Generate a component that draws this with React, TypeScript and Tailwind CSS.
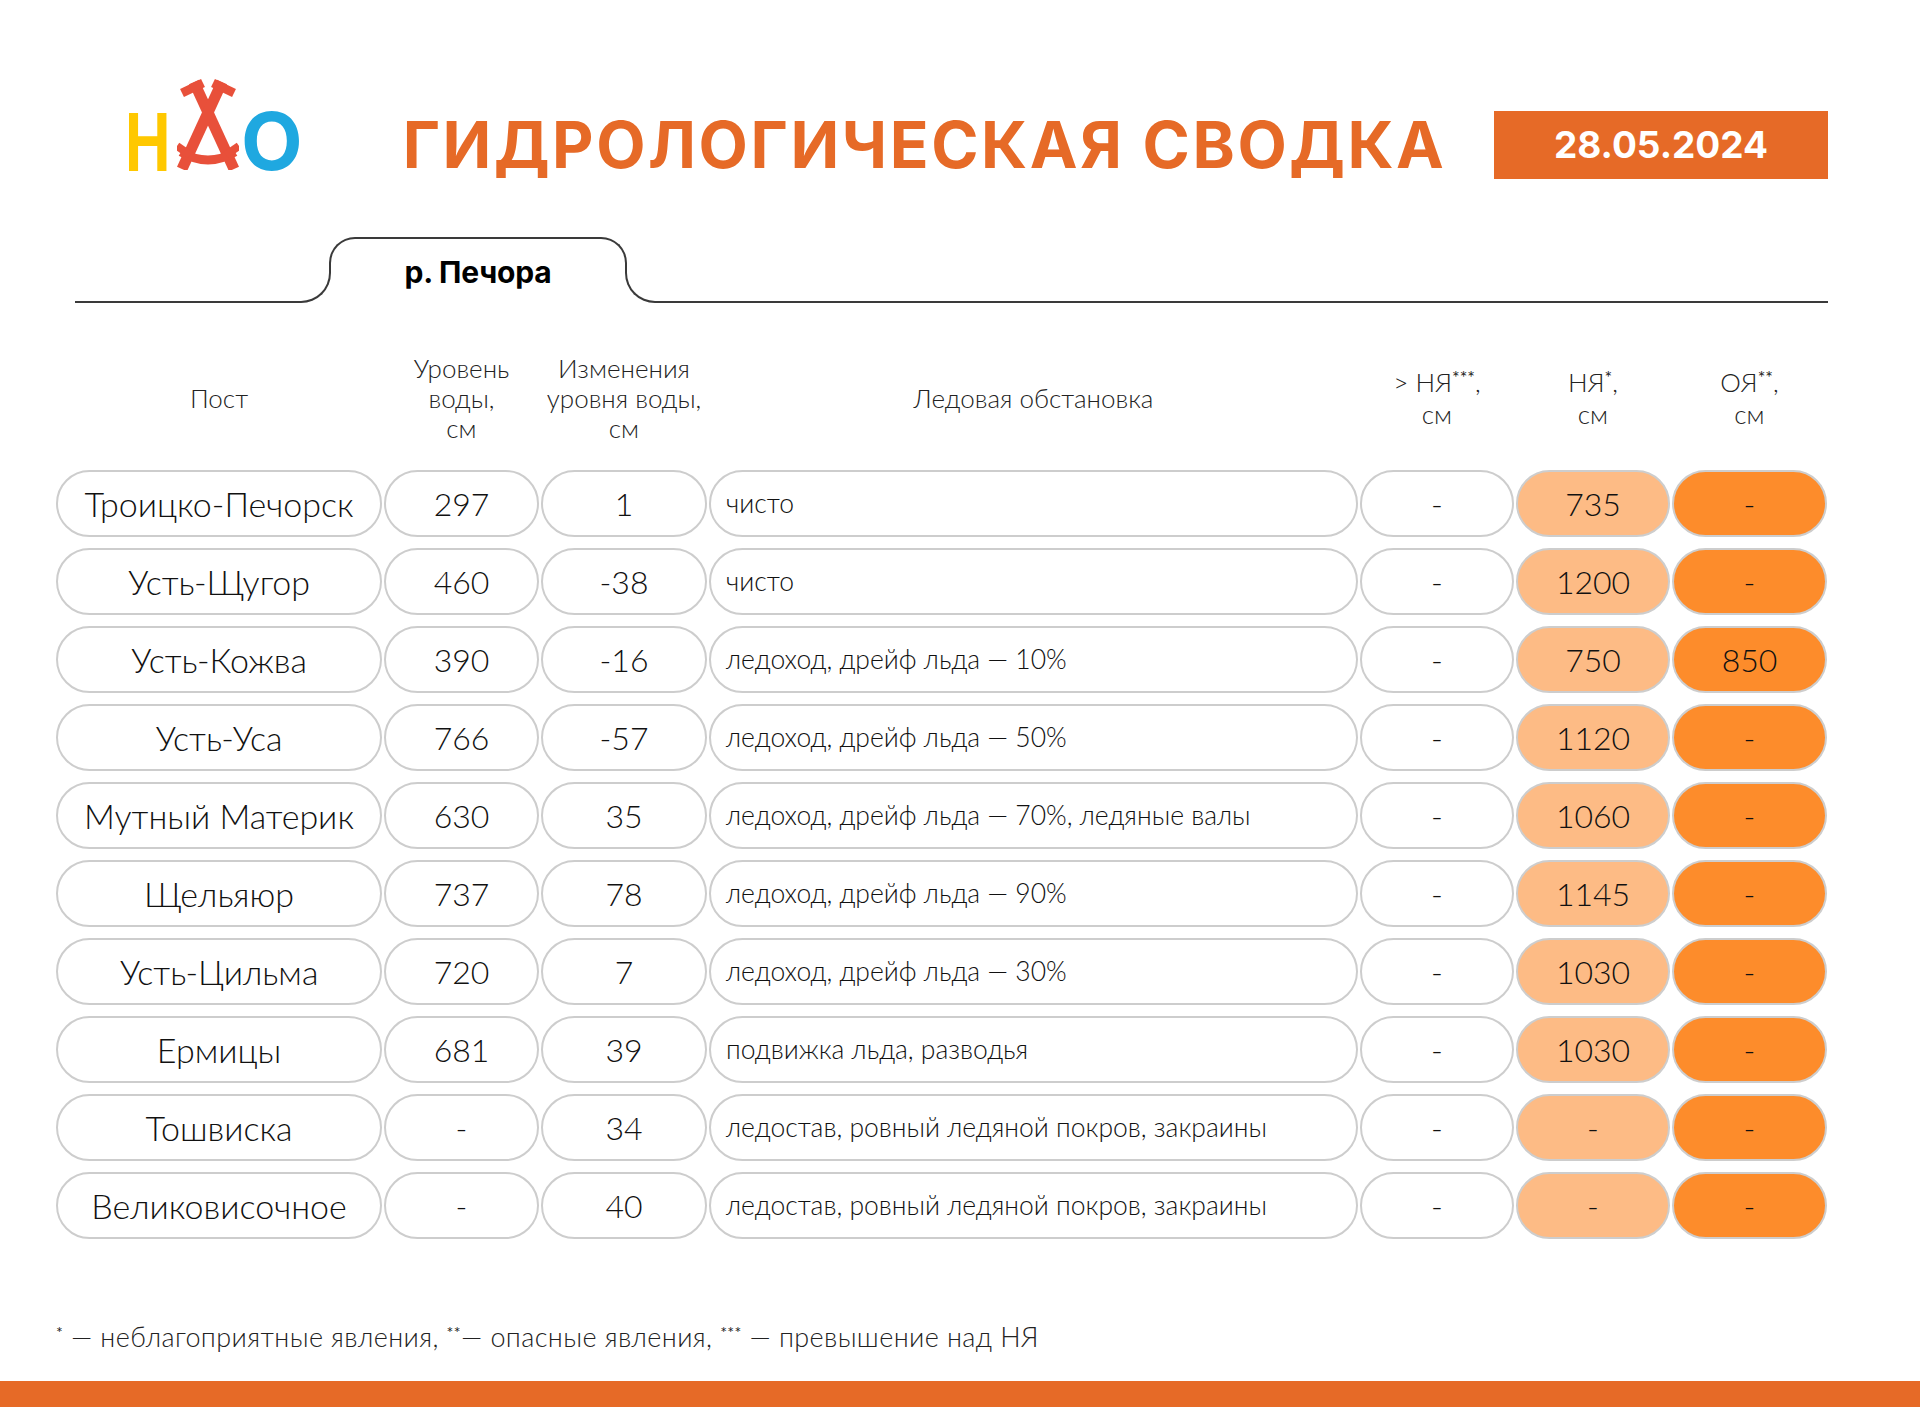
import React from "react";

type Row = {
  post: string;
  level: string;
  change: string;
  ice: string;
  over: string;
  nya: string;
  oya: string;
};

const rows: Row[] = [
  { post: "Троицко-Печорск", level: "297", change: "1", ice: "чисто", over: "-", nya: "735", oya: "-" },
  { post: "Усть-Щугор", level: "460", change: "-38", ice: "чисто", over: "-", nya: "1200", oya: "-" },
  { post: "Усть-Кожва", level: "390", change: "-16", ice: "ледоход, дрейф льда — 10%", over: "-", nya: "750", oya: "850" },
  { post: "Усть-Уса", level: "766", change: "-57", ice: "ледоход, дрейф льда — 50%", over: "-", nya: "1120", oya: "-" },
  { post: "Мутный Материк", level: "630", change: "35", ice: "ледоход, дрейф льда — 70%, ледяные валы", over: "-", nya: "1060", oya: "-" },
  { post: "Щельяюр", level: "737", change: "78", ice: "ледоход, дрейф льда — 90%", over: "-", nya: "1145", oya: "-" },
  { post: "Усть-Цильма", level: "720", change: "7", ice: "ледоход, дрейф льда — 30%", over: "-", nya: "1030", oya: "-" },
  { post: "Ермицы", level: "681", change: "39", ice: "подвижка льда, разводья", over: "-", nya: "1030", oya: "-" },
  { post: "Тошвиска", level: "-", change: "34", ice: "ледостав, ровный ледяной покров, закраины", over: "-", nya: "-", oya: "-" },
  { post: "Великовисочное", level: "-", change: "40", ice: "ледостав, ровный ледяной покров, закраины", over: "-", nya: "-", oya: "-" },
];

const cols = "grid grid-cols-[326px_155px_166px_649px_154px_154px_155px] gap-x-[2px]";

function Tent() {
  return (
    <svg width="62" height="92" viewBox="0 0 62 92" className="block">
      <g stroke="#E8503A" strokeLinecap="butt" fill="none">
        <line x1="17" y1="4" x2="57" y2="91" strokeWidth="11" />
        <line x1="45" y1="4" x2="5" y2="91" strokeWidth="11" />
        <line x1="5" y1="15" x2="26" y2="5" strokeWidth="9" />
        <line x1="36" y1="5" x2="57" y2="15" strokeWidth="9" />
        <path d="M4 74 Q31 90 58 74" strokeWidth="9" />
        <line x1="0" y1="68" x2="13" y2="77" strokeWidth="8" />
        <line x1="49" y1="77" x2="62" y2="68" strokeWidth="8" />
      </g>
    </svg>
  );
}

function Pill({
  children,
  tone,
  align,
}: {
  children: React.ReactNode;
  tone?: "light" | "dark";
  align?: "left";
}) {
  const bg = tone === "light" ? "bg-[#FDBB85]" : tone === "dark" ? "bg-[#FD8C2B]" : "bg-white";
  return (
    <div
      className={`h-[67px] rounded-full border-2 border-[#cdcdcd] flex items-center ${bg} ${
        align === "left" ? "justify-start pl-[15px]" : "justify-center"
      }`}
    >
      {children}
    </div>
  );
}

export default function App() {
  return (
    <div
      className="w-[1920px] h-[1407px] bg-white flex flex-col text-[#111] overflow-hidden font-light"
      style={{ fontFamily: "Lato, 'Open Sans', sans-serif" }}
    >
      {/* Header */}
      <div className="flex items-center h-[68px] mt-[111px] pl-[125px] pr-[92px]">
        <div className="flex items-end h-[93px] mt-[-43px]">
          <span
            className="text-[#FFC800] font-bold text-[80px] leading-[60px] h-[58px] block w-[46px] overflow-visible"
            style={{ fontFamily: "Inter, sans-serif" }}
          >
            <span className="inline-block origin-left scale-x-[0.76]">Н</span>
          </span>
          <div className="ml-[6px]">
            <Tent />
          </div>
          <span
            className="text-[#1FA8E0] font-bold text-[80px] leading-[60px] h-[59px] block ml-[2px]"
            style={{ fontFamily: "Inter, sans-serif" }}
          >
            О
          </span>
        </div>
        <div
          className="ml-[100px] text-[#E66A27] font-bold text-[64px] leading-none tracking-[2.6px]"
          style={{ fontFamily: "Inter, sans-serif" }}
        >
          ГИДРОЛОГИЧЕСКАЯ СВОДКА
        </div>
        <div
          className="ml-auto w-[334px] h-[68px] bg-[#E66A27] flex items-center justify-center text-white font-bold text-[37px]"
          style={{ fontFamily: "Inter, sans-serif" }}
        >
          28.05.2024
        </div>
      </div>

      {/* Tab line */}
      <div className="flex items-end h-[66px] mt-[58px] pl-[75px] pr-[92px]">
        <div className="w-[225px] h-[2px] bg-[#3a3a3a]" />
        <div className="w-[31px] h-[31px] border-b-2 border-r-2 border-[#3a3a3a] rounded-br-[30px]" />
        <div className="w-[298px] h-[66px] -mx-[2px] flex flex-col">
          <div className="h-[36px] border-t-2 border-x-2 border-[#3a3a3a] rounded-t-[26px] flex justify-center pt-[18px]">
            <span
              className="font-bold text-[30px] leading-none text-black whitespace-nowrap tracking-[-0.2px]"
              style={{ fontFamily: "Inter, sans-serif" }}
            >
              р. Печора
            </span>
          </div>
        </div>
        <div className="w-[31px] h-[31px] border-b-2 border-l-2 border-[#3a3a3a] rounded-bl-[30px]" />
        <div className="flex-1 h-[2px] bg-[#3a3a3a]" />
      </div>

      {/* Table */}
      <div className="pl-[56px] mt-[45px]">
        <div className={`${cols} h-[100px] items-center text-center text-[26px] leading-[30px] text-[#222]`}>
          <div>Пост</div>
          <div>
            Уровень
            <br />
            воды,
            <br />
            см
          </div>
          <div>
            Изменения
            <br />
            уровня воды,
            <br />
            см
          </div>
          <div>Ледовая обстановка</div>
          <div className="leading-[32px]">
            &gt; НЯ<sup className="text-[18px] font-normal top-[-0.45em]">***</sup>,
            <br />
            см
          </div>
          <div className="leading-[32px]">
            НЯ<sup className="text-[18px] font-normal top-[-0.45em]">*</sup>,
            <br />
            см
          </div>
          <div className="leading-[32px]">
            ОЯ<sup className="text-[18px] font-normal top-[-0.45em]">**</sup>,
            <br />
            см
          </div>
        </div>

        <div className={`${cols} gap-y-[11px] mt-[22px]`}>
          {rows.map((r) => (
            <React.Fragment key={r.post}>
              <Pill>
                <span className="text-[34px]">{r.post}</span>
              </Pill>
              <Pill>
                <span className="text-[32px]">{r.level}</span>
              </Pill>
              <Pill>
                <span className="text-[32px]">{r.change}</span>
              </Pill>
              <Pill align="left">
                <span className="text-[26.5px]">{r.ice}</span>
              </Pill>
              <Pill>
                <span className="text-[32px]">{r.over}</span>
              </Pill>
              <Pill tone="light">
                <span className="text-[32px]">{r.nya}</span>
              </Pill>
              <Pill tone="dark">
                <span className="text-[32px]">{r.oya}</span>
              </Pill>
            </React.Fragment>
          ))}
        </div>
      </div>

      {/* Footnote */}
      <div className="pl-[56px] mt-[83px] text-[27px] leading-[30px] tracking-[0.4px] text-[#222]">
        <sup className="text-[16px] font-normal top-[-0.55em]">*</sup> — неблагоприятные явления,{" "}
        <sup className="text-[16px] font-normal top-[-0.55em]">**</sup>— опасные явления,{" "}
        <sup className="text-[16px] font-normal top-[-0.55em]">***</sup> — превышение над НЯ
      </div>

      <div className="mt-auto h-[26px] bg-[#E66A27]" />
    </div>
  );
}
